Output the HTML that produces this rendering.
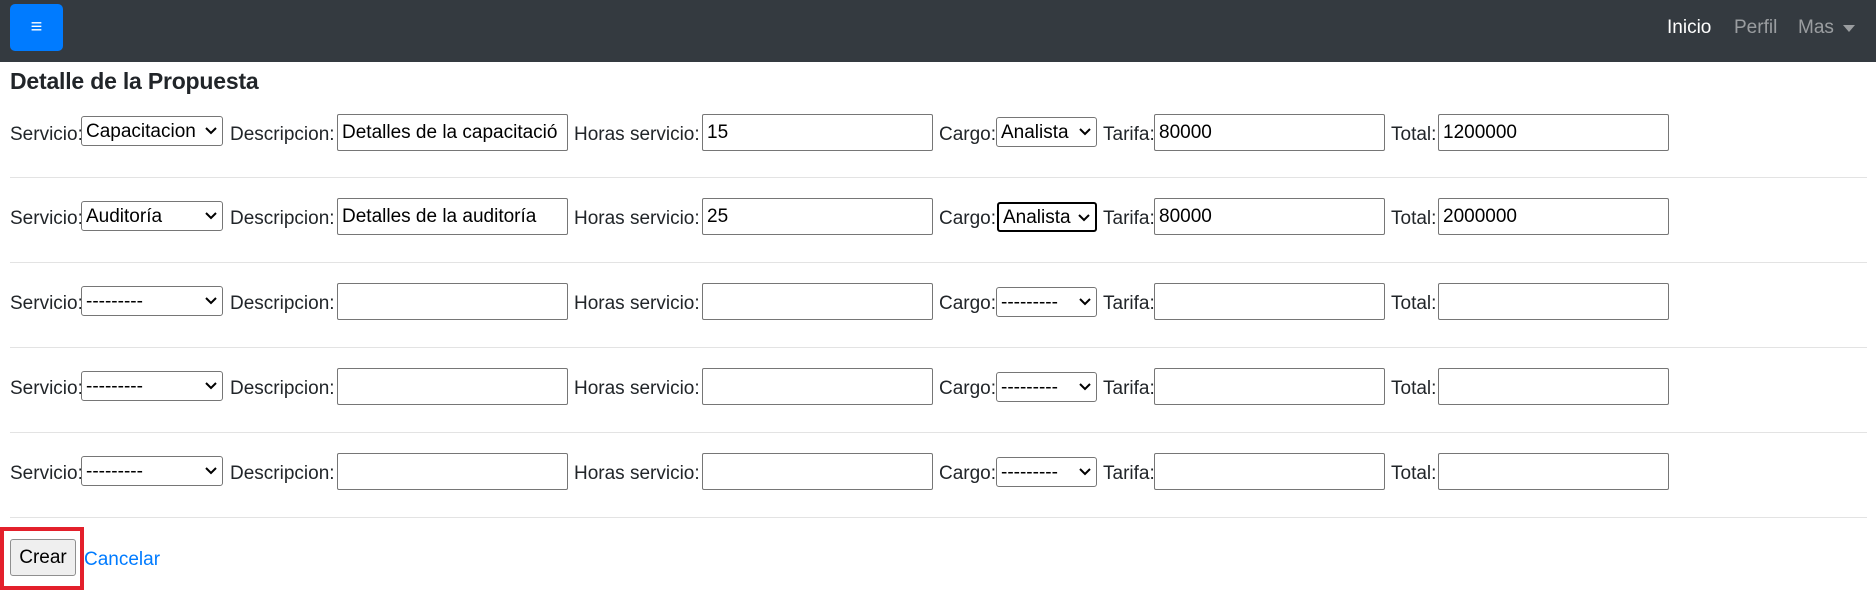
<!DOCTYPE html>
<html><head><meta charset="utf-8"><style>
*{box-sizing:border-box;margin:0;padding:0}
body{width:1876px;height:593px;background:#fff;font-family:"Liberation Sans",sans-serif;color:#212529;position:relative;overflow:hidden}
.nav{position:absolute;left:0;top:0;width:1876px;height:62px;background:#343a40}
.tog{position:absolute;left:10px;top:4px;width:53px;height:47px;background:#007bff;border-radius:5px;color:#fff;font-size:20px;text-align:center;line-height:46px}
.nl{position:absolute;top:17px;font-size:19px;color:rgba(255,255,255,.5)}
h1{position:absolute;left:10px;top:67px;font-size:23px;font-weight:bold;line-height:28px;letter-spacing:-0.2px}
.l{position:absolute;font-size:19px;line-height:22px;margin-top:3px}
.in{position:absolute;height:37px;border:1px solid #767676;border-radius:2px;font-size:19px;line-height:36px;padding-left:4px;color:#000;background:#fff;white-space:nowrap;overflow:hidden}
.sel{position:absolute;height:30px;border:1px solid #767676;border-radius:3px;font-size:19px;line-height:30px;padding-left:4px;color:#000;background:#fff;white-space:nowrap;overflow:hidden}
.sel svg{position:absolute;right:5px;top:10px}
.hr{position:absolute;left:10px;width:1857px;height:1px;background:#e3e3e3}
</style></head><body>
<div class="nav">
<div class="tog">≡</div>
<div class="nl" style="left:1667px;color:#fff">Inicio</div>
<div class="nl" style="left:1734px">Perfil</div>
<div class="nl" style="left:1798px">Mas</div>
<svg style="position:absolute;left:1843px;top:25px" width="12" height="8"><path d="M0 0H12L6 7Z" fill="rgba(255,255,255,.5)"/></svg>
</div>
<h1>Detalle de la Propuesta</h1>

<div style="position:absolute;left:0;top:527px;width:84px;height:63px;border:4px solid #e3202b"></div>
<div style="position:absolute;left:10px;top:539px;width:66px;height:37px;border:1px solid #8f8f8f;border-radius:3px;background:#efefef;font-size:19px;line-height:36px;text-align:center;color:#000">Crear</div>
<div class="l" style="left:84px;top:546px;color:#007bff">Cancelar</div>

<!-- Row 1 -->
<div class="l" style="left:10px;top:121px">Servicio:</div>
<div class="sel" style="left:81px;top:116px;width:142px">Capacitacion<svg width="12" height="8"><path d="M1 1L6 6L11 1" stroke="#000" stroke-width="2" fill="none"/></svg></div>
<div class="l" style="left:230px;top:121px">Descripcion:</div>
<div class="in" style="left:337px;top:114px;width:231px">Detalles de la capacitació</div>
<div class="l" style="left:574px;top:121px">Horas servicio:</div>
<div class="in" style="left:702px;top:114px;width:231px">15</div>
<div class="l" style="left:939px;top:121px">Cargo:</div>
<div class="sel" style="left:996px;top:117px;width:101px">Analista<svg width="12" height="8"><path d="M1 1L6 6L11 1" stroke="#000" stroke-width="2" fill="none"/></svg></div>
<div class="l" style="left:1103px;top:121px">Tarifa:</div>
<div class="in" style="left:1154px;top:114px;width:231px">80000</div>
<div class="l" style="left:1391px;top:121px">Total:</div>
<div class="in" style="left:1438px;top:114px;width:231px">1200000</div>
<div class="hr" style="top:177px"></div>

<!-- Row 2 -->
<div class="l" style="left:10px;top:205px">Servicio:</div>
<div class="sel" style="left:81px;top:201px;width:142px">Auditoría<svg width="12" height="8"><path d="M1 1L6 6L11 1" stroke="#000" stroke-width="2" fill="none"/></svg></div>
<div class="l" style="left:230px;top:205px">Descripcion:</div>
<div class="in" style="left:337px;top:198px;width:231px">Detalles de la auditoría</div>
<div class="l" style="left:574px;top:205px">Horas servicio:</div>
<div class="in" style="left:702px;top:198px;width:231px">25</div>
<div class="l" style="left:939px;top:205px">Cargo:</div>
<div class="sel" style="left:997px;top:202px;width:100px;border:2px solid #000;line-height:28px">Analista<svg width="12" height="8"><path d="M1 1L6 6L11 1" stroke="#000" stroke-width="2" fill="none"/></svg></div>
<div class="l" style="left:1103px;top:205px">Tarifa:</div>
<div class="in" style="left:1154px;top:198px;width:231px">80000</div>
<div class="l" style="left:1391px;top:205px">Total:</div>
<div class="in" style="left:1438px;top:198px;width:231px">2000000</div>
<div class="hr" style="top:262px"></div>

<!-- Row 3 -->
<div class="l" style="left:10px;top:290px">Servicio:</div>
<div class="sel" style="left:81px;top:286px;width:142px">---------<svg width="12" height="8"><path d="M1 1L6 6L11 1" stroke="#000" stroke-width="2" fill="none"/></svg></div>
<div class="l" style="left:230px;top:290px">Descripcion:</div>
<div class="in" style="left:337px;top:283px;width:231px"></div>
<div class="l" style="left:574px;top:290px">Horas servicio:</div>
<div class="in" style="left:702px;top:283px;width:231px"></div>
<div class="l" style="left:939px;top:290px">Cargo:</div>
<div class="sel" style="left:996px;top:287px;width:101px">---------<svg width="12" height="8"><path d="M1 1L6 6L11 1" stroke="#000" stroke-width="2" fill="none"/></svg></div>
<div class="l" style="left:1103px;top:290px">Tarifa:</div>
<div class="in" style="left:1154px;top:283px;width:231px"></div>
<div class="l" style="left:1391px;top:290px">Total:</div>
<div class="in" style="left:1438px;top:283px;width:231px"></div>
<div class="hr" style="top:347px"></div>

<!-- Row 4 -->
<div class="l" style="left:10px;top:375px">Servicio:</div>
<div class="sel" style="left:81px;top:371px;width:142px">---------<svg width="12" height="8"><path d="M1 1L6 6L11 1" stroke="#000" stroke-width="2" fill="none"/></svg></div>
<div class="l" style="left:230px;top:375px">Descripcion:</div>
<div class="in" style="left:337px;top:368px;width:231px"></div>
<div class="l" style="left:574px;top:375px">Horas servicio:</div>
<div class="in" style="left:702px;top:368px;width:231px"></div>
<div class="l" style="left:939px;top:375px">Cargo:</div>
<div class="sel" style="left:996px;top:372px;width:101px">---------<svg width="12" height="8"><path d="M1 1L6 6L11 1" stroke="#000" stroke-width="2" fill="none"/></svg></div>
<div class="l" style="left:1103px;top:375px">Tarifa:</div>
<div class="in" style="left:1154px;top:368px;width:231px"></div>
<div class="l" style="left:1391px;top:375px">Total:</div>
<div class="in" style="left:1438px;top:368px;width:231px"></div>
<div class="hr" style="top:432px"></div>

<!-- Row 5 -->
<div class="l" style="left:10px;top:460px">Servicio:</div>
<div class="sel" style="left:81px;top:456px;width:142px">---------<svg width="12" height="8"><path d="M1 1L6 6L11 1" stroke="#000" stroke-width="2" fill="none"/></svg></div>
<div class="l" style="left:230px;top:460px">Descripcion:</div>
<div class="in" style="left:337px;top:453px;width:231px"></div>
<div class="l" style="left:574px;top:460px">Horas servicio:</div>
<div class="in" style="left:702px;top:453px;width:231px"></div>
<div class="l" style="left:939px;top:460px">Cargo:</div>
<div class="sel" style="left:996px;top:457px;width:101px">---------<svg width="12" height="8"><path d="M1 1L6 6L11 1" stroke="#000" stroke-width="2" fill="none"/></svg></div>
<div class="l" style="left:1103px;top:460px">Tarifa:</div>
<div class="in" style="left:1154px;top:453px;width:231px"></div>
<div class="l" style="left:1391px;top:460px">Total:</div>
<div class="in" style="left:1438px;top:453px;width:231px"></div>
<div class="hr" style="top:517px"></div>
</body></html>
